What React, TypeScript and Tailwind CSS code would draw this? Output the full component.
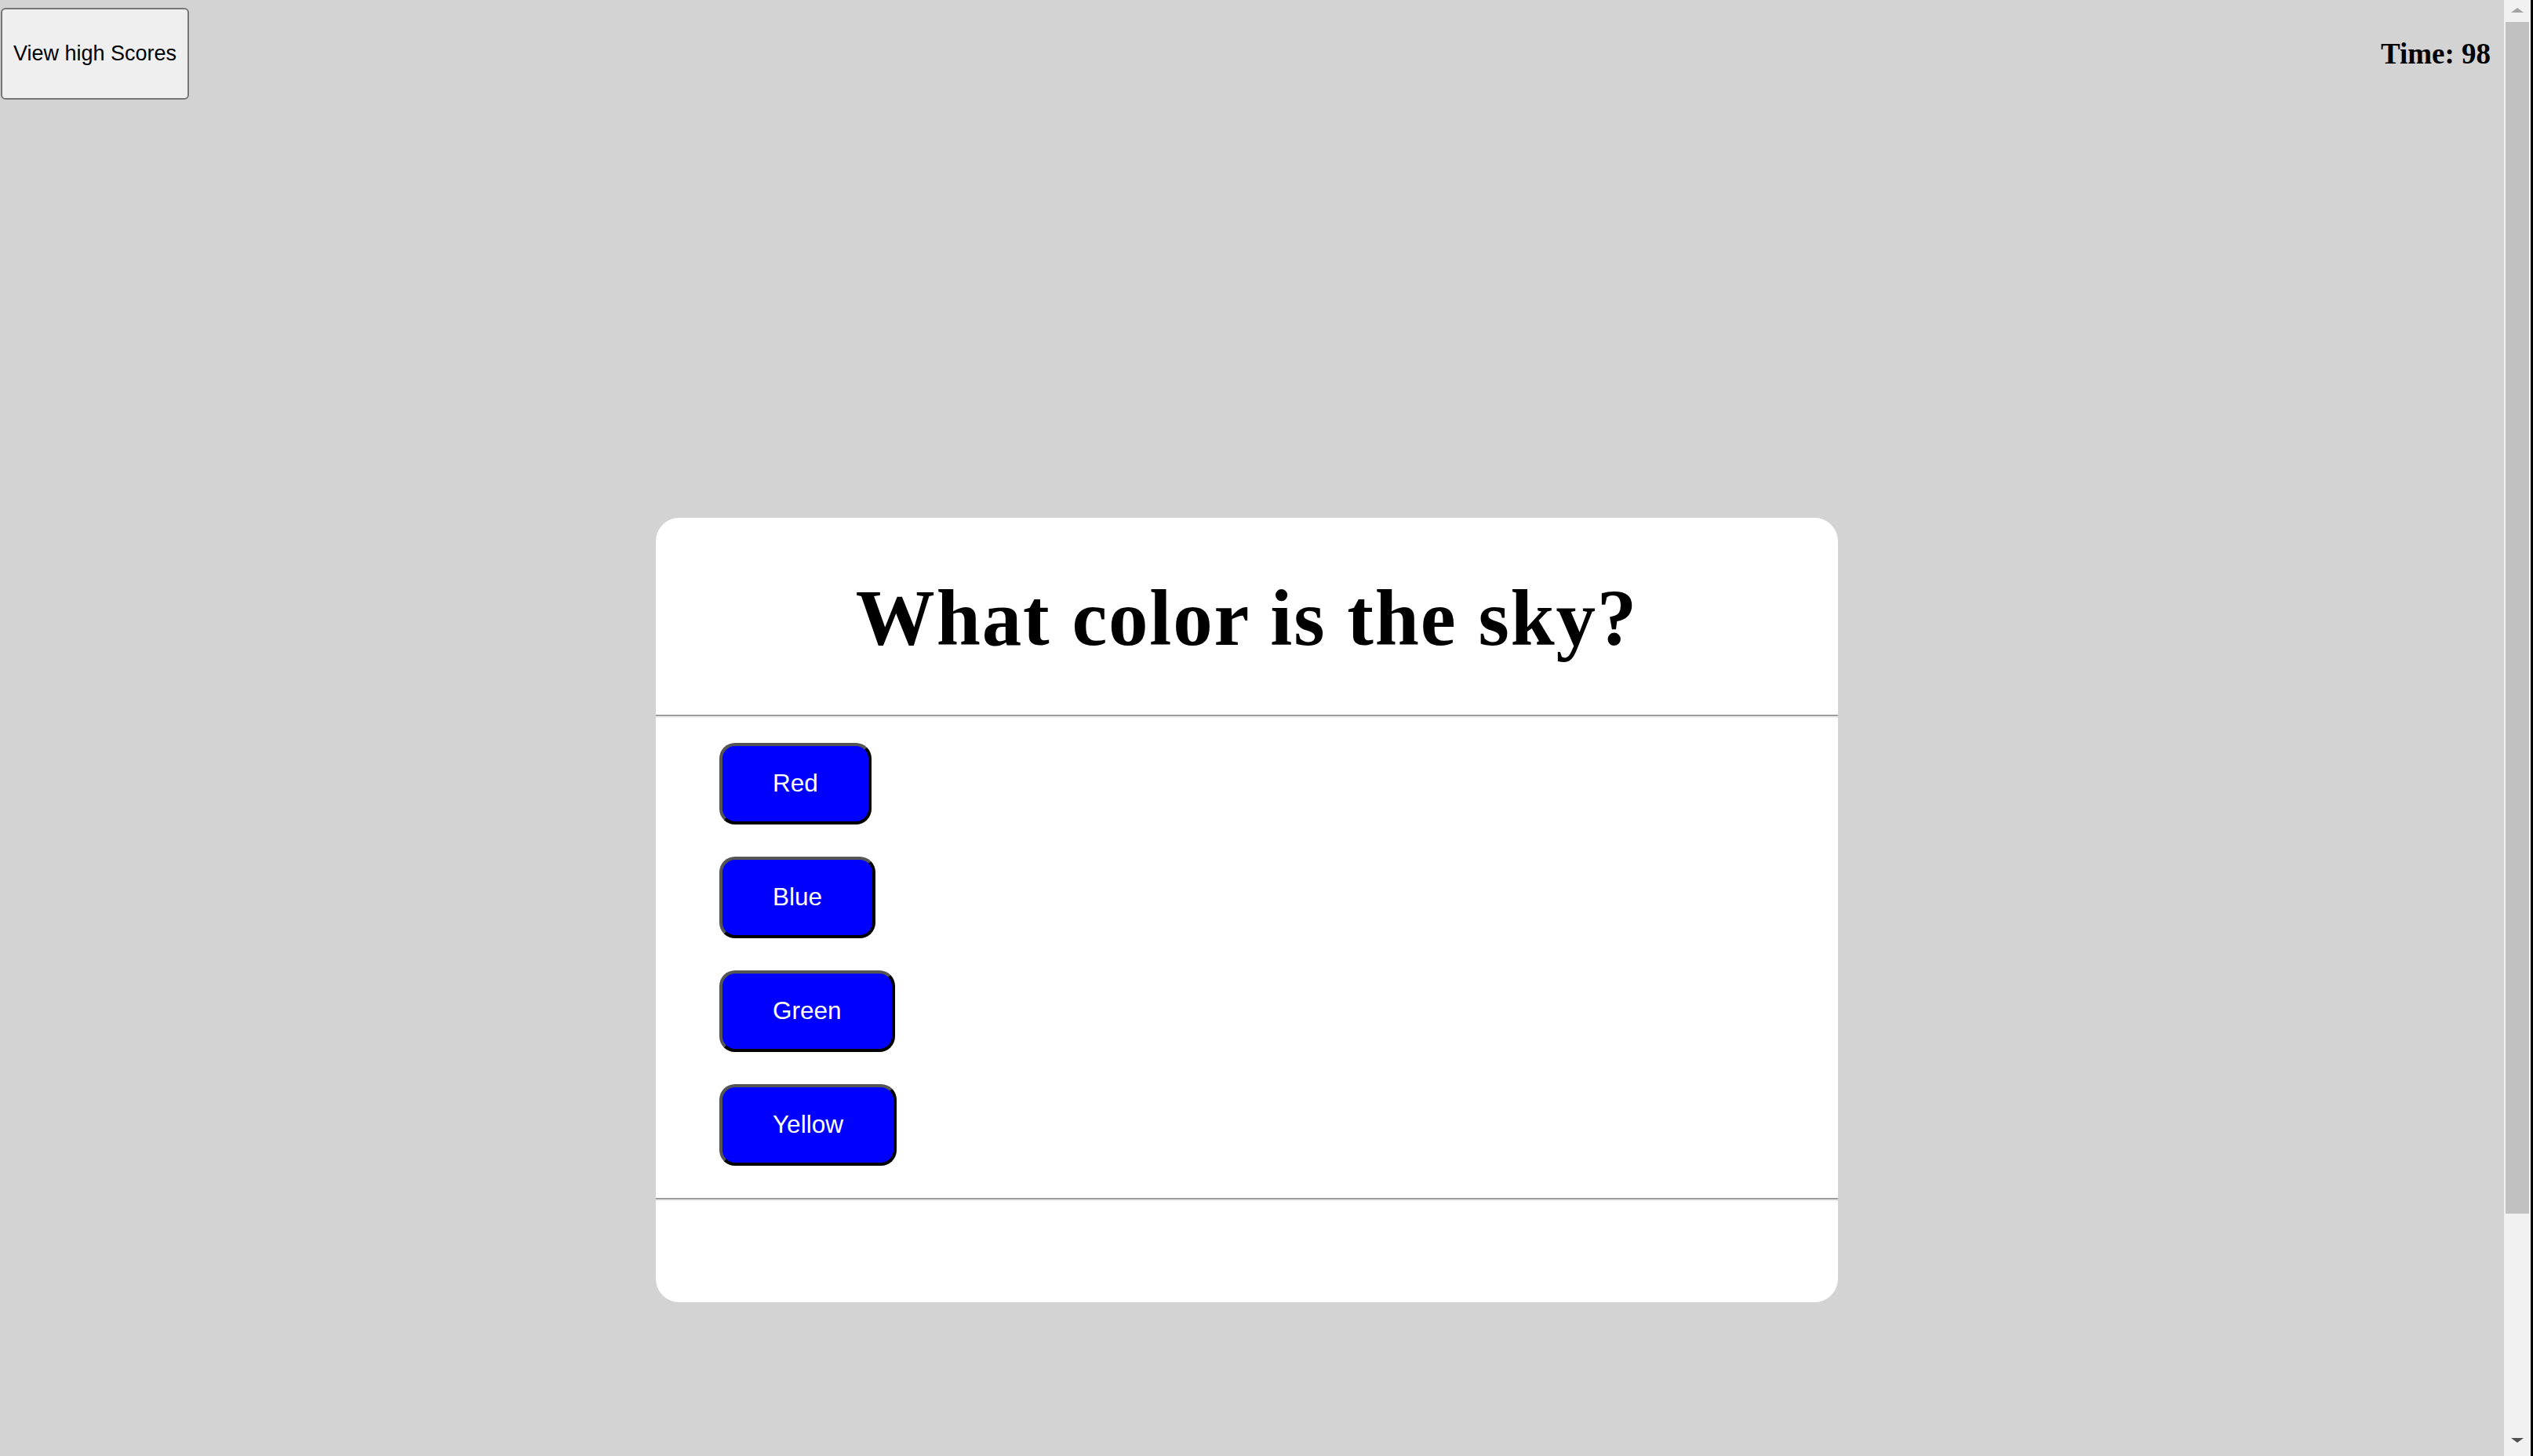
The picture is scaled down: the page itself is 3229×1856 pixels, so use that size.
import React from "react";

const choices = ["Red", "Blue", "Green", "Yellow"];

const Divider = () => (
  <div className="border-t-2 border-b-2 border-t-[#9d9d9d] border-b-[#eeeeee]" />
);

const App = () => {
  return (
    <div className="flex h-screen w-full overflow-hidden">
      <div className="flex-1 bg-[#d3d3d3] flex flex-col">
        <div className="flex justify-between items-start">
          <button className="ml-[1px] mt-[10px] h-[117px] px-[14px] bg-[#efefef] border-2 border-[#767676] rounded-[6px] text-[27px] text-black font-['Liberation_Sans',Arial,sans-serif]">
            View high Scores
          </button>
          <div className="mt-[50px] mr-[17px] text-[37px] leading-none font-bold text-black font-['Liberation_Serif','Times_New_Roman',serif]">
            Time: 98
          </div>
        </div>

        <div className="flex justify-center pr-[13px] mt-[533px]">
          <div className="w-[1507px] h-[1000px] bg-white rounded-[30px] flex flex-col">
            <div className="h-[251px] flex items-center justify-center pt-[5px]">
              <h1 className="text-[101px] leading-none font-bold tracking-[1.8px] text-black font-['Liberation_Serif','Times_New_Roman',serif]">
                What color is the sky?
              </h1>
            </div>
            <Divider />
            <div className="flex flex-col items-start pl-[81px] pt-[32px]">
              {choices.map((choice) => (
                <button
                  key={choice}
                  className="h-[104px] px-[64px] mb-[41px] bg-[#0000ff] text-white text-[31.5px] rounded-[20px] border-4 border-[#555555] border-r-black border-b-black font-['Liberation_Sans',Arial,sans-serif]"
                >
                  {choice}
                </button>
              ))}
            </div>
            <Divider />
            <div className="flex-1" />
          </div>
        </div>
      </div>

      {/* fake scrollbar */}
      <div className="w-[34px] bg-[#f1f1f1] flex flex-col items-center">
        <svg width="16" height="8" viewBox="0 0 16 8" className="mt-[8px]">
          <path d="M0 8 L8 2 L16 8 Z" fill="#a3a3a3" />
        </svg>
        <div className="w-[30px] h-[1519px] mt-[12px] bg-[#c1c1c1]" />
        <div className="flex-1" />
        <svg width="16" height="8" viewBox="0 0 16 8" className="mb-[15px]">
          <path d="M0 0 L8 6 L16 0 Z" fill="#505050" />
        </svg>
      </div>
      <div className="w-[3px] bg-black" />
    </div>
  );
};

export default App;
